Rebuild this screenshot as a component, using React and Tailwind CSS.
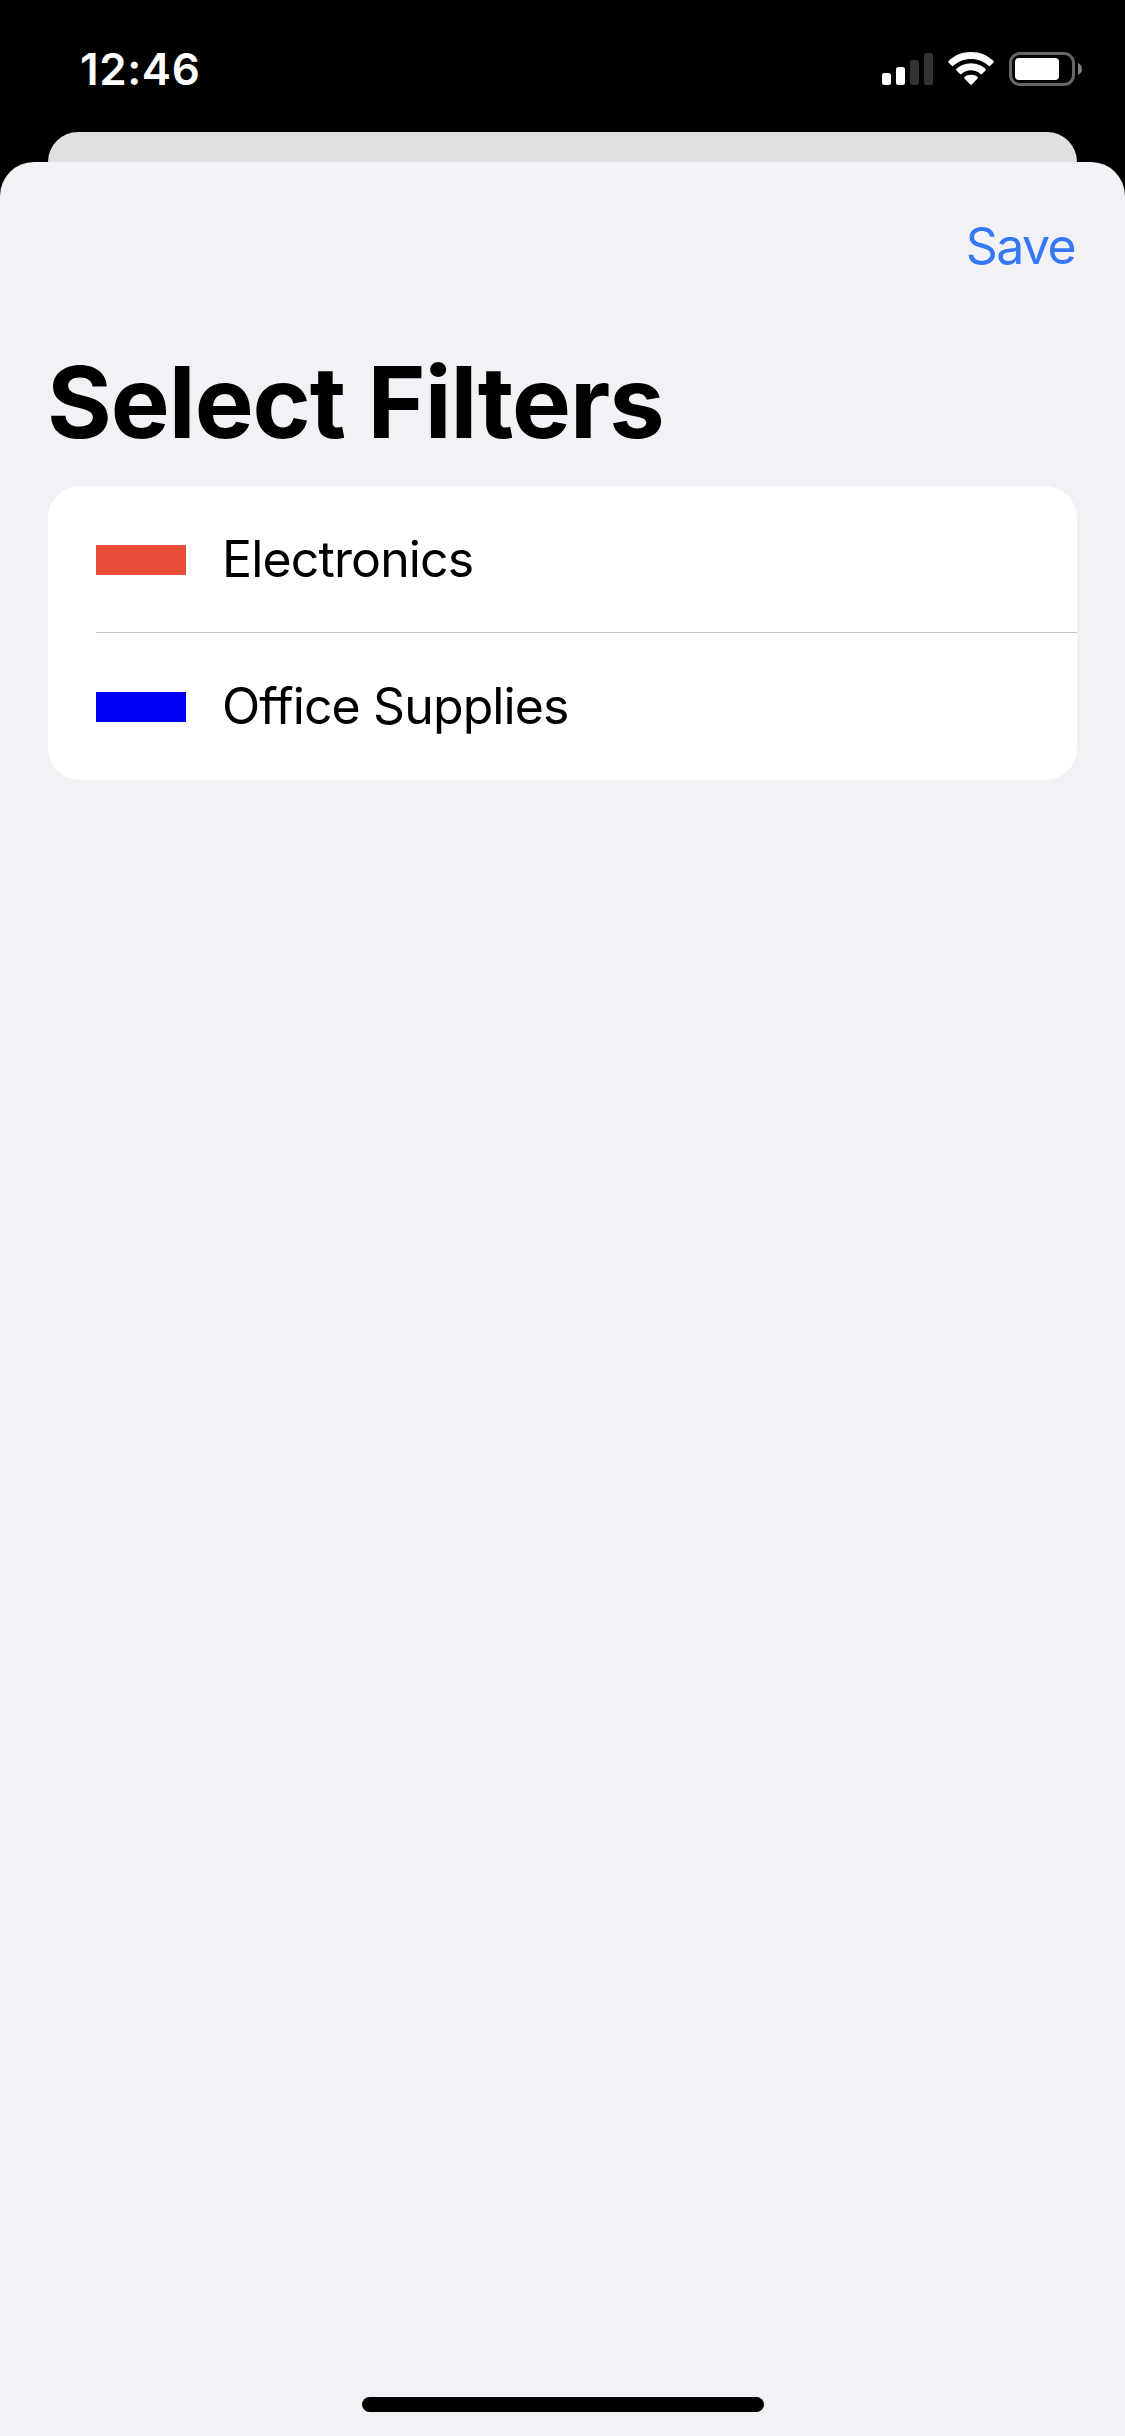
import React from 'react';

const filters = [
  { name: 'Electronics', swatch: 'bg-[#eb4d3d] mt-[2px]', text: 'tracking-[-0.86px]', height: 'h-[146px]' },
  { name: 'Office Supplies', swatch: 'bg-[#0000f5]', text: 'tracking-[-0.88px] mb-[2px]', height: 'h-[147px]' },
];

function SignalIcon() {
  return (
    <svg width="51" height="32" viewBox="0 0 51 32" fill="#fff">
      <rect x="0" y="20" width="9" height="12" rx="2.5" />
      <rect x="14" y="14" width="9" height="18" rx="2.5" />
      <rect x="28" y="7" width="9" height="25" rx="2.5" fill="#333" />
      <rect x="42" y="0" width="9" height="32" rx="2.5" fill="#333" />
    </svg>
  );
}

function WifiIcon() {
  return (
    <svg width="46" height="33" viewBox="0 0 46 33" fill="#fff">
      <path d="M23 0C31.700 0 39.600 3.300 45.500 8.900Q46.300 9.700 45.500 10.500L42.200 13.800Q41.400 14.600 40.600 13.800C35.900 9.500 29.700 7 23 7S10.100 9.500 5.400 13.800Q4.600 14.600 3.800 13.800L.5 10.500Q-.3 9.700.5 8.900C6.400 3.300 14.300 0 23 0Z" />
      <path d="M23 11.200C28.600 11.200 33.700 13.300 37.500 16.800Q38.300 17.600 37.500 18.400L34 21.900Q33.200 22.600 32.400 21.900C29.900 19.700 26.600 18.300 23 18.300S16.100 19.700 13.600 21.900Q12.800 22.600 12 21.900L8.500 18.400Q7.700 17.600 8.500 16.800C12.300 13.300 17.400 11.200 23 11.200Z" />
      <path d="M23 22.700C25.600 22.700 27.900 23.600 29.500 25Q30.300 25.800 29.500 26.600L23.800 32.400Q23 33.200 22.200 32.400L16.500 26.600Q15.700 25.800 16.500 25C18.100 23.600 20.400 22.700 23 22.700Z" />
    </svg>
  );
}

function BatteryIcon() {
  return (
    <svg width="73" height="34" viewBox="0 0 73 34">
      <rect x="1.500" y="1.500" width="63" height="31" rx="9.500" fill="none" stroke="#666" strokeWidth="3" />
      <rect x="6" y="6" width="44" height="22" rx="4" fill="#fff" />
      <path d="M69 11C71.400 12 73 14.300 73 17S71.400 22 69 23Z" fill="#808080" />
    </svg>
  );
}

export default function App() {
  return (
    <div className="flex h-[2436px] w-[1125px] flex-col bg-black font-['Inter','Liberation_Sans',sans-serif]">
      <header className="flex h-[132px] items-start justify-between pt-[52px] pr-[43px] pl-[80px] text-white">
        <time className="text-[44px] leading-[34px] font-semibold tracking-[0.6px]">12:46</time>
        <div className="flex items-start">
          <div className="mt-px mr-[15px]"><SignalIcon /></div>
          <div className="mr-[15px]"><WifiIcon /></div>
          <BatteryIcon />
        </div>
      </header>

      <div className="mx-12 h-[30px] rounded-t-[30px] bg-[#e0e0e0]" />

      <main className="flex flex-1 flex-col rounded-t-[34px] bg-[#f2f1f6]">
        <nav className="flex h-[168px] items-center justify-end pr-[50px]">
          <button className="text-[50px] leading-[60px] tracking-[-1.6px] text-[#3478f6]">Save</button>
        </nav>

        <h1 className="mt-[6px] mb-[18px] pl-[47px] text-[99px] leading-[132px] font-bold tracking-[-1px] whitespace-nowrap text-black">
          Select Filters
        </h1>

        <ul className="mx-12 overflow-hidden rounded-[32px] bg-white">
          {filters.map((filter, i) => (
            <li key={filter.name} className="pl-12">
              {i > 0 && <div className="h-px bg-[#c6c6c8]" />}
              <div className={`flex items-center gap-9 ${filter.height}`}>
                <span className={`h-[30px] w-[90px] ${filter.swatch}`} />
                <span className={`text-[50px] leading-[60px] text-black ${filter.text}`}>{filter.name}</span>
              </div>
            </li>
          ))}
        </ul>

        <div className="mx-auto mt-auto mb-[24px] h-[15px] w-[402px] rounded-full bg-black" />
      </main>
    </div>
  );
}
